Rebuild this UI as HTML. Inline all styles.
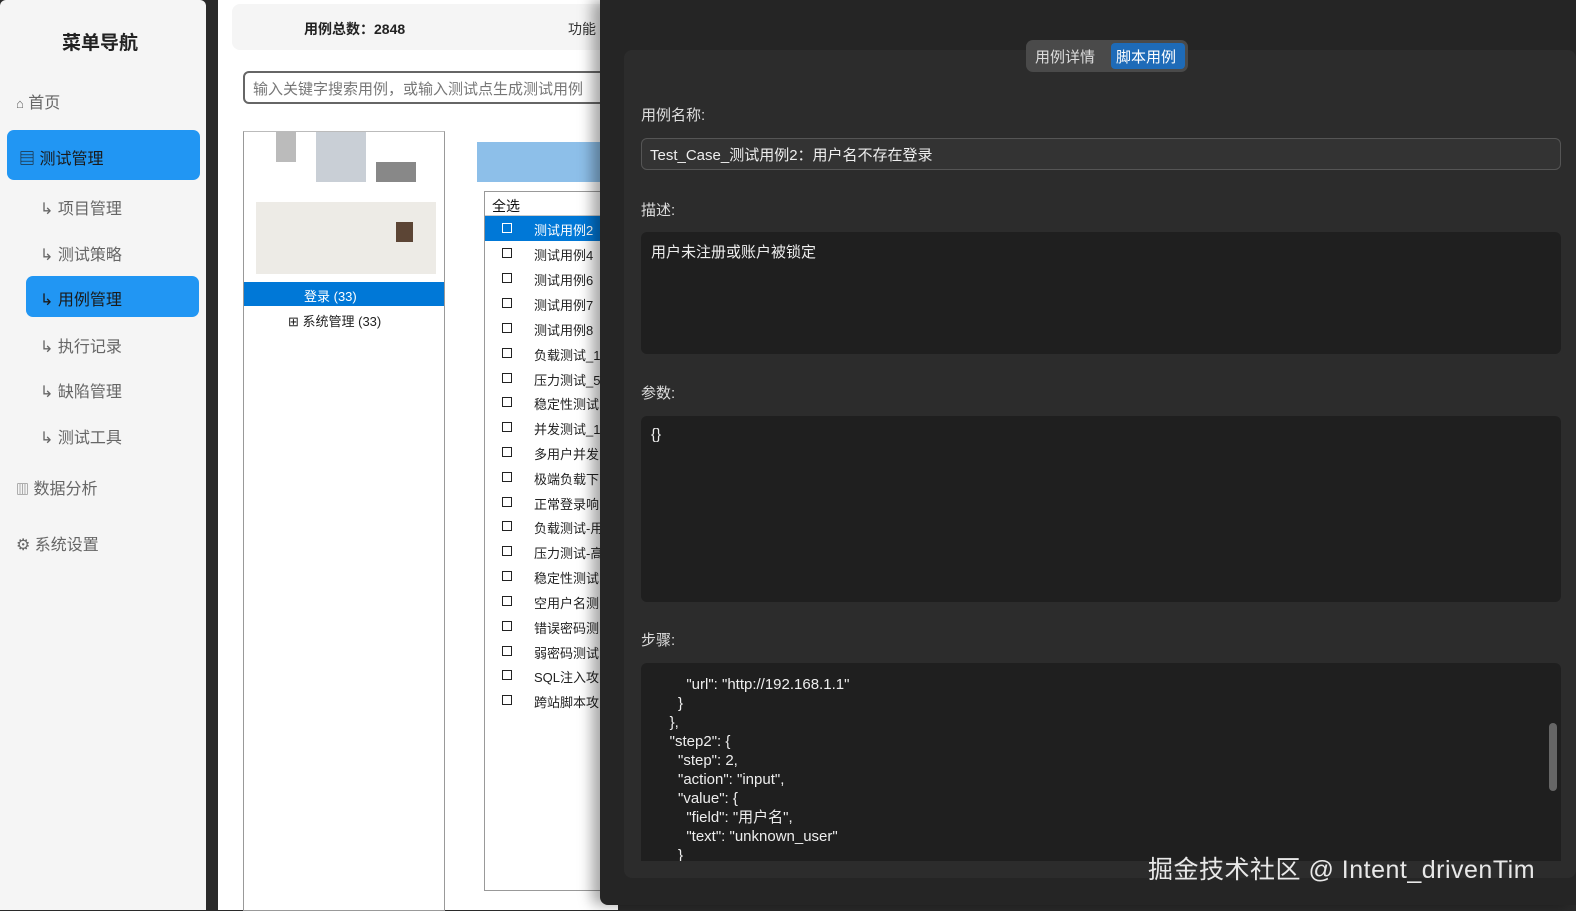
<!DOCTYPE html>
<html><head><meta charset="utf-8"><style>
*{margin:0;padding:0;box-sizing:border-box}
body{width:1576px;height:910px;overflow:hidden;background:#2a2a2a;font-family:"Liberation Sans","Noto Sans CJK SC",sans-serif;position:relative}
.a{position:absolute}
.side{left:0;top:0;width:206px;height:910px;background:#f5f5f5;border-radius:6px 6px 0 0}
.nav{color:#666;font-size:16px}
.main{left:218px;top:0;width:400px;height:910px;background:#fff}
.dark{left:600px;top:0;width:976px;height:905px;background:#252525;border-radius:0 0 0 8px;box-shadow:-8px 0 14px rgba(0,0,0,.35)}
.card{left:624px;top:50px;width:952px;height:828px;background:#2c2c2c;border-radius:8px}
.lbl{color:#ddd;font-size:15px}
.box{background:#1f1f1f;border-radius:6px}
.row{position:absolute;left:0;width:116px;height:25px;font-size:13px;color:#222}
.row i{position:absolute;left:17px;top:7px;width:10px;height:10px;border:1.3px solid #222}
.row span{position:absolute;left:49px;top:4px;white-space:nowrap}
pre{font-family:"Liberation Sans","Noto Sans CJK SC",sans-serif;color:#eee;font-size:15px;line-height:19px}
</style></head><body>
<div class="a side">
 <div class="a" style="left:62px;top:28px;font-size:19px;color:#222;font-weight:bold">菜单导航</div>
 <div class="a nav" style="left:16px;top:89px"><span style="font-size:13px">⌂</span> 首页</div>
 <div class="a" style="left:7px;top:130px;width:193px;height:50px;background:#2196f3;border-radius:7px;color:#1a1a1a;font-size:16px;padding:15px 0 0 12px">▤ 测试管理</div>
 <div class="a nav" style="left:40px;top:195px">↳ 项目管理</div>
 <div class="a nav" style="left:40px;top:241px">↳ 测试策略</div>
 <div class="a" style="left:26px;top:276px;width:173px;height:41px;background:#2196f3;border-radius:7px;color:#1a1a1a;font-size:16px;padding:10px 0 0 14px">↳ 用例管理</div>
 <div class="a nav" style="left:40px;top:333px">↳ 执行记录</div>
 <div class="a nav" style="left:40px;top:378px">↳ 缺陷管理</div>
 <div class="a nav" style="left:40px;top:424px">↳ 测试工具</div>
 <div class="a nav" style="left:16px;top:475px"><span style="font-size:13px">▥</span> 数据分析</div>
 <div class="a nav" style="left:16px;top:531px">⚙ 系统设置</div>
</div>
<div class="a main">
 <div class="a" style="left:14px;top:4px;width:400px;height:46px;background:#f5f5f5;border-radius:8px"></div>
 <div class="a" style="left:86px;top:19px;font-size:14px;font-weight:bold;color:#222">用例总数：2848</div>
 <div class="a" style="left:350px;top:19px;font-size:14px;color:#333">功能</div>
 <div class="a" style="left:25px;top:71px;width:380px;height:33px;border:2px solid #666;border-radius:6px;font-size:15px;color:#777;padding:5px 8px;white-space:nowrap;overflow:hidden">输入关键字搜索用例，或输入测试点生成测试用例</div>
 <div class="a" style="left:25px;top:131px;width:202px;height:780px;border:1px solid #999;border-top:1px solid #bbb;background:#fff"></div>
 <div class="a" style="left:58px;top:132px;width:20px;height:30px;background:#bbb"></div>
 <div class="a" style="left:98px;top:132px;width:50px;height:50px;background:#c9cfd6"></div>
 <div class="a" style="left:158px;top:162px;width:40px;height:20px;background:#888"></div>
 <div class="a" style="left:38px;top:202px;width:180px;height:72px;background:#e6e2dc;opacity:.7"></div>
 <div class="a" style="left:178px;top:222px;width:17px;height:20px;background:#5c4535"></div>
 <div class="a" style="left:26px;top:282px;width:200px;height:24px;background:#0078d7;color:#fff;font-size:13px;padding:4px 0 0 60px">登录 (33)</div>
 <div class="a" style="left:70px;top:311px;font-size:13px;color:#222">⊞ 系统管理 (33)</div>
 <div class="a" style="left:259px;top:142px;width:130px;height:40px;background:#8dbfe9"></div>
 <div class="a" style="left:266px;top:191px;width:130px;height:700px;border:1px solid #999;background:#fff">
  <div class="a" style="left:0;top:0;width:130px;height:24px;border-bottom:1px solid #ccc;font-size:14px;padding:4px 7px;color:#111">全选</div>
  <div class="row" style="top:24px;background:#0078d7;color:#fff"><i style="border-color:#fff"></i><span>测试用例2</span></div>
  <div class="row" style="top:49px"><i></i><span>测试用例4</span></div>
  <div class="row" style="top:74px"><i></i><span>测试用例6</span></div>
  <div class="row" style="top:99px"><i></i><span>测试用例7</span></div>
  <div class="row" style="top:124px"><i></i><span>测试用例8</span></div>
  <div class="row" style="top:149px"><i></i><span>负载测试_1</span></div>
  <div class="row" style="top:174px"><i></i><span>压力测试_5</span></div>
  <div class="row" style="top:198px"><i></i><span>稳定性测试</span></div>
  <div class="row" style="top:223px"><i></i><span>并发测试_1</span></div>
  <div class="row" style="top:248px"><i></i><span>多用户并发</span></div>
  <div class="row" style="top:273px"><i></i><span>极端负载下</span></div>
  <div class="row" style="top:298px"><i></i><span>正常登录响</span></div>
  <div class="row" style="top:322px"><i></i><span>负载测试-用</span></div>
  <div class="row" style="top:347px"><i></i><span>压力测试-高</span></div>
  <div class="row" style="top:372px"><i></i><span>稳定性测试</span></div>
  <div class="row" style="top:397px"><i></i><span>空用户名测</span></div>
  <div class="row" style="top:422px"><i></i><span>错误密码测</span></div>
  <div class="row" style="top:447px"><i></i><span>弱密码测试</span></div>
  <div class="row" style="top:471px"><i></i><span>SQL注入攻</span></div>
  <div class="row" style="top:496px"><i></i><span>跨站脚本攻</span></div>
 </div>
</div>
<div class="a dark"></div>
<div class="a card"></div>
<div class="a" style="left:1026px;top:40px;width:162px;height:32px;background:#4a4a4a;border-radius:7px"></div>
<div class="a" style="left:1035px;top:46px;font-size:15px;color:#ddd">用例详情</div>
<div class="a" style="left:1111px;top:43px;width:74px;height:26px;background:#1e6bb8;border-radius:4px;font-size:15px;color:#fff;padding:3px 0 0 5px">脚本用例</div>
<div class="a lbl" style="left:641px;top:104px">用例名称:</div>
<div class="a" style="left:641px;top:138px;width:920px;height:32px;background:#333;border:1.5px solid #555;border-radius:6px;color:#eee;font-size:15px;padding:5px 8px">Test_Case_测试用例2：用户名不存在登录</div>
<div class="a lbl" style="left:641px;top:199px">描述:</div>
<div class="a box" style="left:641px;top:232px;width:920px;height:122px;color:#eee;font-size:15px;padding:9px 10px">用户未注册或账户被锁定</div>
<div class="a lbl" style="left:641px;top:382px">参数:</div>
<div class="a box" style="left:641px;top:416px;width:920px;height:186px;color:#eee;font-size:15px;padding:10px 10px">{}</div>
<div class="a lbl" style="left:641px;top:629px">步骤:</div>
<div class="a box" style="left:641px;top:663px;width:920px;height:198px;overflow:hidden;border-radius:6px 6px 0 0">
<pre style="position:absolute;left:12px;top:12px">        "url": "http://192.168.1.1"
      }
    },
    "step2": {
      "step": 2,
      "action": "input",
      "value": {
        "field": "用户名",
        "text": "unknown_user"
      }</pre>
 <div class="a" style="left:908px;top:60px;width:8px;height:68px;background:#666;border-radius:4px"></div>
</div>
<div class="a" style="left:1148px;top:850px;font-size:25px;color:#e8e8e8;white-space:nowrap;letter-spacing:0.5px">掘金技术社区 @ Intent_drivenTim</div>
</body></html>
